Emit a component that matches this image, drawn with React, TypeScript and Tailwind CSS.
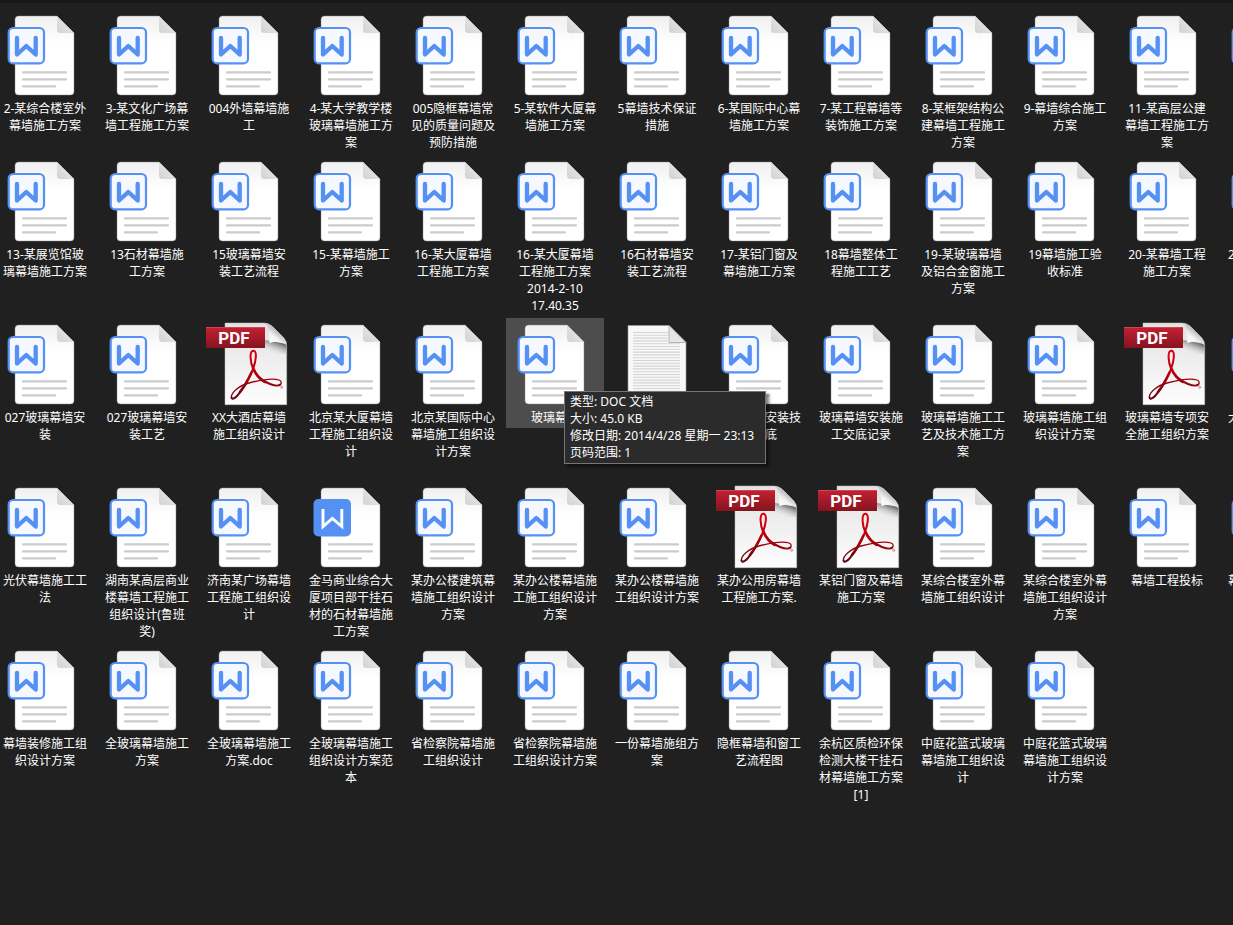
type Kind = "word" | "wordSolid" | "pdf" | "txt";

interface FileItem {
  lines: string[];
  kind?: Kind;
  hovered?: boolean;
  edge?: boolean;
  tall?: boolean;
}

const FILES: FileItem[] = [
  { lines: ["2-某综合楼室外", "幕墙施工方案"] },
  { lines: ["3-某文化广场幕", "墙工程施工方案"] },
  { lines: ["004外墙幕墙施", "工"] },
  { lines: ["4-某大学教学楼", "玻璃幕墙施工方", "案"] },
  { lines: ["005隐框幕墙常", "见的质量问题及", "预防措施"] },
  { lines: ["5-某软件大厦幕", "墙施工方案"] },
  { lines: ["5幕墙技术保证", "措施"] },
  { lines: ["6-某国际中心幕", "墙施工方案"] },
  { lines: ["7-某工程幕墙等", "装饰施工方案"] },
  { lines: ["8-某框架结构公", "建幕墙工程施工", "方案"] },
  { lines: ["9-幕墙综合施工", "方案"] },
  { lines: ["11-某高层公建", "幕墙工程施工方", "案"] },
  { lines: [], edge: true },

  { lines: ["13-某展览馆玻", "璃幕墙施工方案"] },
  { lines: ["13石材幕墙施", "工方案"] },
  { lines: ["15玻璃幕墙安", "装工艺流程"] },
  { lines: ["15-某幕墙施工", "方案"] },
  { lines: ["16-某大厦幕墙", "工程施工方案"] },
  { lines: ["16-某大厦幕墙", "工程施工方案", "2014-2-10", "17.40.35"] },
  { lines: ["16石材幕墙安", "装工艺流程"] },
  { lines: ["17-某铝门窗及", "幕墙施工方案"] },
  { lines: ["18幕墙整体工", "程施工工艺"] },
  { lines: ["19-某玻璃幕墙", "及铝合金窗施工", "方案"] },
  { lines: ["19幕墙施工验", "收标准"] },
  { lines: ["20-某幕墙工程", "施工方案"] },
  { lines: ["2"], edge: true },

  { lines: ["027玻璃幕墙安", "装"] },
  { lines: ["027玻璃幕墙安", "装工艺"] },
  { lines: ["XX大酒店幕墙", "施工组织设计"], kind: "pdf" },
  { lines: ["北京某大厦幕墙", "工程施工组织设", "计"] },
  { lines: ["北京某国际中心", "幕墙施工组织设", "计方案"] },
  { lines: ["玻璃幕墙"], hovered: true },
  { lines: [], kind: "txt" },
  { lines: ["玻璃幕墙安装技", "术交底"] },
  { lines: ["玻璃幕墙安装施", "工交底记录"] },
  { lines: ["玻璃幕墙施工工", "艺及技术施工方", "案"] },
  { lines: ["玻璃幕墙施工组", "织设计方案"] },
  { lines: ["玻璃幕墙专项安", "全施工组织方案"], kind: "pdf" },
  { lines: ["大"], edge: true, tall: true },

  { lines: ["光伏幕墙施工工", "法"] },
  { lines: ["湖南某高层商业", "楼幕墙工程施工", "组织设计(鲁班", "奖)"] },
  { lines: ["济南某广场幕墙", "工程施工组织设", "计"] },
  { lines: ["金马商业综合大", "厦项目部干挂石", "材的石材幕墙施", "工方案"], kind: "wordSolid" },
  { lines: ["某办公楼建筑幕", "墙施工组织设计", "方案"] },
  { lines: ["某办公楼幕墙施", "工施工组织设计", "方案"] },
  { lines: ["某办公楼幕墙施", "工组织设计方案"] },
  { lines: ["某办公用房幕墙", "工程施工方案."], kind: "pdf" },
  { lines: ["某铝门窗及幕墙", "施工方案"], kind: "pdf" },
  { lines: ["某综合楼室外幕", "墙施工组织设计"] },
  { lines: ["某综合楼室外幕", "墙施工组织设计", "方案"] },
  { lines: ["幕墙工程投标"] },
  { lines: ["幕"], edge: true },

  { lines: ["幕墙装修施工组", "织设计方案"] },
  { lines: ["全玻璃幕墙施工", "方案"] },
  { lines: ["全玻璃幕墙施工", "方案.doc"] },
  { lines: ["全玻璃幕墙施工", "组织设计方案范", "本"] },
  { lines: ["省检察院幕墙施", "工组织设计"] },
  { lines: ["省检察院幕墙施", "工组织设计方案"] },
  { lines: ["一份幕墙施组方", "案"] },
  { lines: ["隐框幕墙和窗工", "艺流程图"] },
  { lines: ["余杭区质检环保", "检测大楼干挂石", "材幕墙施工方案", "[1]"] },
  { lines: ["中庭花篮式玻璃", "幕墙施工组织设", "计"] },
  { lines: ["中庭花篮式玻璃", "幕墙施工组织设", "计方案"] },
];

// gradients shared by all the icons
function IconDefs() {
  return (
    <svg className="absolute size-0" aria-hidden="true">
      <defs>
        <linearGradient id="page" x1="0" y1="0" x2="0" y2="1">
          <stop offset="0" stopColor="#f0f0f0" />
          <stop offset="0.35" stopColor="#ffffff" />
          <stop offset="1" stopColor="#ffffff" />
        </linearGradient>
        <linearGradient id="fold" x1="0.1" y1="0.9" x2="0.6" y2="0.4">
          <stop offset="0" stopColor="#d4d4d4" />
          <stop offset="1" stopColor="#e4e4e4" />
        </linearGradient>
        <linearGradient id="pdfPage" x1="0" y1="0" x2="0" y2="1">
          <stop offset="0" stopColor="#e2e2e2" />
          <stop offset="1" stopColor="#fdfdfd" />
        </linearGradient>
        <linearGradient id="banner" x1="0" y1="0" x2="0" y2="1">
          <stop offset="0" stopColor="#c52033" />
          <stop offset="1" stopColor="#86141f" />
        </linearGradient>
        <linearGradient id="acrobat" gradientUnits="userSpaceOnUse" x1="0" y1="32" x2="0" y2="82">
          <stop offset="0" stopColor="#e3000f" />
          <stop offset="0.5" stopColor="#b3000c" />
          <stop offset="1" stopColor="#5c0a14" />
        </linearGradient>
        <linearGradient id="curl" gradientUnits="userSpaceOnUse" x1="69" y1="26" x2="78" y2="15">
          <stop offset="0" stopColor="#ffffff" />
          <stop offset="0.6" stopColor="#f4f4f4" />
          <stop offset="1" stopColor="#c4c4c4" />
        </linearGradient>
        <linearGradient id="curlShade" gradientUnits="userSpaceOnUse" x1="76" y1="22" x2="71" y2="35">
          <stop offset="0" stopColor="#4f4f4f" />
          <stop offset="1" stopColor="#e6e6e6" stopOpacity="0" />
        </linearGradient>
      </defs>
    </svg>
  );
}

function WordIcon({ solid }: { solid?: boolean }) {
  return (
    <svg viewBox="0 0 98 91" className="block h-[91px] w-[98px]" aria-hidden="true">
      <path
        d="M22.500 7H61L78 24V82.500Q78 86 74.500 86H22.500Q19 86 19 82.500V10.500Q19 7 22.500 7Z"
        fill="url(#page)"
        stroke="#8a8a8a"
        strokeOpacity="0.6"
        strokeWidth="0.8"
      />
      <path d="M61 7L78 24H64.500Q61 24 61 20.500Z" fill="url(#fold)" />
      <g stroke="#cbcbcb" strokeWidth="2.200" strokeLinecap="round">
        <path d="M27 63.400H70" />
        <path d="M27 70.400H70" />
        <path d="M27 77.400H59" />
      </g>
      {solid ? (
        <>
          <rect x="11.500" y="18" width="37.500" height="37.500" rx="5" fill="#5590f3" />
          <path d="M21 28V45.500L30.300 37.500L39.800 45.500V28" fill="none" stroke="#fff" strokeWidth="2.900" />
        </>
      ) : (
        <>
          <rect x="12.700" y="19" width="35.300" height="35.400" rx="4.500" fill="#f5f8ff" stroke="#5590f3" strokeWidth="2.200" />
          <path
            d="M21 29V45.500L30.300 37L39.700 45.500V29"
            fill="none"
            stroke="#5590f3"
            strokeWidth="4.300"
            strokeLinecap="round"
            strokeLinejoin="round"
          />
        </>
      )}
    </svg>
  );
}

function PdfIcon() {
  return (
    <svg viewBox="0 0 98 91" className="block h-[91px] w-[98px]" aria-hidden="true">
      <path d="M25 5H64Q69 5 73 9L84 20Q86.700 23 86.700 28V86.700H25Z" fill="url(#pdfPage)" stroke="#bdbdbd" strokeWidth="0.5" />
      <path d="M65 22L86.500 26V36H62Z" fill="url(#curlShade)" />
      <path d="M65 5Q70 9 69.300 25Q80 21 86.700 27.500Q85 21 77 13Q70 5.500 65 5Z" fill="url(#curl)" />
      <rect x="6" y="9" width="59" height="21" fill="url(#banner)" />
      <path d="M6 9.500H65" stroke="#dc5260" strokeWidth="0.7" />
      <text x="34" y="26" textAnchor="middle" fill="#fff" className="font-['Roboto',sans-serif] text-[17px] font-bold">
        PDF
      </text>
      <g fill="none" stroke="url(#acrobat)" strokeLinecap="round">
        <path d="M53.300 32.800C49 33 50.500 45 53 50C56 57 62 63 70 66C75 67.800 79 68 80.300 66.500" strokeWidth="2" />
        <path d="M53.300 32.800C57.500 32.800 56 43 53 51C49 61 43 71 37.500 77.500C34.500 81 32 81.500 31.500 79.500" strokeWidth="2" />
        <path d="M31.500 79.500C30.800 75 38 68 49 65C59 62.300 73 60 79 62C81.800 63 81.500 65.500 80.300 66.500" strokeWidth="1.300" />
        <path d="M53 50C56 57 60 61.500 65 64" strokeWidth="2.600" />
        <path d="M51.500 54.500C48 62 44 69 40 74" strokeWidth="2.600" />
      </g>
      <circle cx="81.700" cy="69.300" r="1" fill="none" stroke="#b75a62" strokeWidth="0.7" />
    </svg>
  );
}

function TxtIcon() {
  return (
    <svg viewBox="0 0 98 91" className="block h-[91px] w-[98px]" aria-hidden="true">
      <path d="M20 7.500H61L78 24.500V86H20Z" fill="#f8f8f8" stroke="#9a9a9a" strokeWidth="0.6" />
      <g stroke="#d2d4d6" strokeWidth="1.100">
        {Array.from({ length: 24 }, (_, i) => (
          <path key={i} d={`M25 ${14.5 + i * 2.8}H${i < 4 ? 60 : 72}`} />
        ))}
      </g>
      <path d="M61 7.500L78 24.500H61Z" fill="#e6e6e6" stroke="#a4a4a4" strokeWidth="0.8" />
    </svg>
  );
}

function FileIcon({ kind = "word" }: { kind?: Kind }) {
  if (kind === "pdf") return <PdfIcon />;
  if (kind === "txt") return <TxtIcon />;
  return <WordIcon solid={kind === "wordSolid"} />;
}

function FileTooltip() {
  return (
    <div
      role="tooltip"
      className="absolute top-[73px] left-[58px] z-10 w-[202px] border border-[#767676] bg-[#2b2b2b] px-[5px] pt-px pb-[2px] text-left whitespace-nowrap shadow-[3px_3px_3px_rgba(0,0,0,0.5)]"
    >
      <div>类型: DOC 文档</div>
      <div>大小: 45.0 KB</div>
      <div>修改日期: 2014/4/28 星期一 23:13</div>
      <div>页码范围: 1</div>
    </div>
  );
}

function FileCell({ file }: { file: FileItem }) {
  return (
    <li className={`relative ${file.tall ? "min-h-[161px]" : ""}`}>
      <button
        type="button"
        className={`block w-full pb-[2px] whitespace-nowrap ${file.hovered ? "bg-[#4d4d4d]" : ""} ${
          file.edge ? "text-left" : "text-center"
        }`}
      >
        <FileIcon kind={file.kind} />
        {file.lines.map((line, i) => (
          <span key={i} className={`block ${file.edge ? "pl-2" : ""}`}>
            {line}
          </span>
        ))}
      </button>
      {file.hovered && <FileTooltip />}
    </li>
  );
}

export default function App() {
  return (
    <main className="min-h-screen overflow-hidden border-t-3 border-[#191919] bg-[#202020] font-['Noto_Sans','Noto_Sans_CJK_SC',sans-serif] text-[12px] leading-[17px] text-white">
      <IconDefs />
      <ul className="-ml-1 grid grid-cols-[repeat(13,98px)] items-start gap-x-1 gap-y-[2px] pt-[6px]">
        {FILES.map((file, i) => (
          <FileCell key={i} file={file} />
        ))}
      </ul>
    </main>
  );
}
